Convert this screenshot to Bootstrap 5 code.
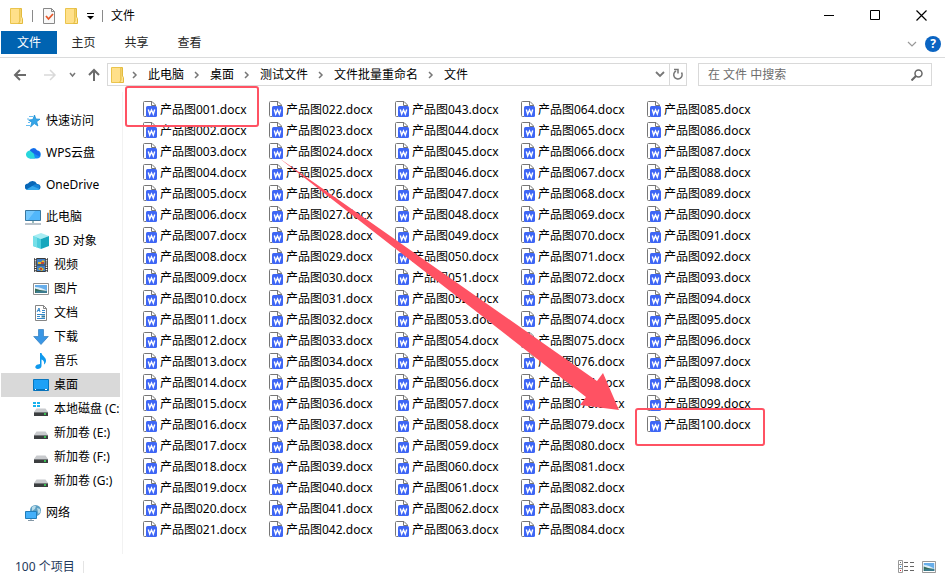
<!DOCTYPE html>
<html lang="zh-CN">
<head>
<meta charset="utf-8">
<meta name="viewport" content="width=device-width, initial-scale=1">
<title>文件</title>
<link href="https://cdn.jsdelivr.net/npm/bootstrap@5.3.0/dist/css/bootstrap.min.css" rel="stylesheet">
<style>
body{font-family:"Noto Sans","Noto Sans CJK SC",sans-serif;font-size:12px;line-height:20px;color:#000;background:#fff}
svg{display:block;flex:none}
button,.plain{border:0;background:none;padding:0;color:inherit}
a{color:inherit;text-decoration:none}
.titlebar{height:31px;padding-left:10px;padding-right:1px}
.sep{width:1px;height:12px;background:#8a8a8a}
.sep.pale{background:#e4e4e4}
.win{width:46px;height:30px;display:grid;place-items:center}
.ribbon{height:27px;border-bottom:1px solid #dadbdc;padding-left:1px}
.tab{height:23px;width:53px;color:#262626}
.tab.file{background:#0063b1;color:#fff;width:56px}
.help{width:16px;height:16px;border-radius:8px;background:#0a64c2;color:#fff;font-weight:700;line-height:16px}
.addr{height:34px;padding:0 13px 1px}
.arrows{gap:12px;padding-right:7px}
.box{height:23px;border:1px solid #d9d9d9}
.crumbs{flex:575 1 0;padding-left:3px}
.crumbs li svg{margin:0 9px}
.crumbs li:first-child svg{margin-left:6px}
.find{flex:215 1 0;min-width:0;margin-left:11px;padding:0 8px 0 9px}
.find input{outline:0;color:#6d6d6d;min-width:0}
.find input::placeholder{color:#6d6d6d;opacity:1}
.refresh{width:17px;height:21px;border-left:1px solid #d9d9d9;display:grid;place-items:center}
.side{width:123px;padding:17px 2px 29px 1px;border-right:1px solid #f2f2f2}
.side li{height:24px}
.side li.top{margin-top:8px}
.side li.first{margin-top:0}
.side a{height:24px;padding-left:32px;gap:5px;white-space:nowrap;overflow:hidden}
.side li.top a{padding-left:24px}
.side a.on{background:#d9d9d9}
.pane{padding:7px 0 0 20px}
.files{display:grid;grid-auto-flow:column;grid-template-rows:repeat(21,21px);grid-auto-columns:126px}
.files a{height:21px;gap:1px;white-space:nowrap}
.marks{position:absolute;left:0;top:0;overflow:visible;pointer-events:none}
.status{height:25px;padding:0 9px 0 15px;color:#1e395b}
</style>
</head>
<body>
<svg width="0" height="0" class="position-absolute" aria-hidden="true">
  <symbol id="folder" viewBox="0 0 14 16"><path d="M.5.5h9.500v15H.5z" fill="#ffe08a" stroke="#eac44c"/><path d="M10 9.500V.5h1.500V9l1 1.500v5H8.500L10 13z" fill="#ffe596" stroke="#e3bb3e"/></symbol>
  <symbol id="doc" viewBox="0 0 16 17"><path d="M3.500 15.500h-2a1 1 0 0 1-1-1v-13a1 1 0 0 1 1-1h7.500l3.500 3.500v1" fill="#fff" stroke="#777"/><path d="M8.500.5v4h4" fill="none" stroke="#777"/><rect x="3" y="5" width="11" height="11" rx="1.500" fill="#3e66f5"/><path d="M5.300 8.500 6.700 13 8.500 9l1.800 4 1.400-4.500" fill="none" stroke="#fff" stroke-width="1.400"/></symbol>
  <symbol id="star" viewBox="0 0 16 16"><path d="m9.500 2 1.400 4 4.100.2-3.300 2.500 1.200 4.300-3.600-2.400L5.500 14l1.300-4.600L3.600 7l4.200-.5z" fill="#35a5e8" stroke="#168bd1" stroke-width=".7"/><path d="M4 3.500h4M2 6h2M3 9.500h2M1 12.500h4" stroke="#68bdf0"/></symbol>
  <symbol id="wps" viewBox="0 0 16 16"><path d="M5 13.500a4 4 0 0 1-.5-7.500 4 4 0 0 1 7.500-.5 4 4 0 0 1-.5 8z" fill="#168df5"/><path d="M5 13.500a4 4 0 1 1 3.500-6L10 13.500z" fill="#28d6dc"/><path d="M5 5.500a4 4 0 0 1 7 0 4 4 0 0 1 2.500 6L8 8z" fill="#1767e8"/></symbol>
  <symbol id="one" viewBox="0 0 16 16"><path d="M3 13a3 3 0 0 1 0-6.500A5 5 0 0 1 12 7a3 3 0 0 1 1 6z" fill="#0867b7"/><path d="M1.500 12.500 9.500 7.500a4 4 0 0 1 3 0A3 3 0 0 1 13 13H3z" fill="#1683d6"/><path d="m1.500 12.500 6-3.500 7.500 3.200L13 13H3z" fill="#35a9ed"/></symbol>
  <symbol id="pc" viewBox="0 0 16 16"><path d="M.5 1.500h15v10H.5z" fill="#52b7fa" stroke="#39779f"/><path d="M1 2h9L3 11H1z" fill="#8cd4ff" opacity=".6"/><path d="M7 12h2v2H7z" fill="#9bb"/><path d="M0 15h16" stroke="#748798"/></symbol>
  <symbol id="cube" viewBox="0 0 16 16"><path d="m0 3 8-3 8 3-8 3z" fill="#a8edf3"/><path d="m0 3 8 3v10l-8-3z" fill="#4ccedd"/><path d="m16 3-8 3v10l8-3z" fill="#16a7bd"/><path d="m0 3 4 1.500v10L0 13z" fill="#75dfe8"/></symbol>
  <symbol id="video" viewBox="0 0 16 16"><path d="M1 1h14v14H1z" fill="#3a3a3a"/><path d="M2.500 1v14M13.500 1v14" stroke="#fff" stroke-width="1.500" stroke-dasharray="1.200 1"/><path d="M4 2h8v5.500H4zM4 8.500h8V14H4z" fill="#3f7fc7"/><path d="M5 5h3l2-2 2 2-3 2H5zM5 12l3-2 3 2-2 2z" fill="#e9b722"/><path d="M8 5h3v2H8zM7 11h2v2H7z" fill="#bd4937"/></symbol>
  <symbol id="image" viewBox="0 0 16 16"><path d="M.5 2.500h15v11H.5z" fill="#fff" stroke="#909090"/><path d="M2 4h12v8H2z" fill="#68aeea"/><path d="M2 6q6 0 12 4v2H2z" fill="#dff0f9"/><path d="M2 7.500 7 9l7 1v2H2z" fill="#376d5c"/><path d="M3 11h11" stroke="#408bc2"/></symbol>
  <symbol id="text" viewBox="0 0 16 16"><path d="M2.500.5h8l3 3v12h-11z" fill="#fff" stroke="#858585"/><path d="M10.500.5v3h3" fill="none" stroke="#858585"/><path d="m4 7 2-4 1 4M4.500 5.500h2.500M9 5.500h3M9 7.500h3M4 9.500h8M4 11.500h3M4 13.500h8" fill="none" stroke="#3689ca"/><path d="M8.500 10.500H12v2H8.500z" fill="#347a9b"/></symbol>
  <symbol id="down" viewBox="0 0 16 16"><path d="M5.500.5h5v7h4.800L8 15.500.7 7.500h4.800z" fill="#3996e5" stroke="#317dbd" stroke-width=".7"/></symbol>
  <symbol id="music" viewBox="0 0 16 16"><path d="M7 0h1.500c.5 3 4.500 4 4.500 7.500 0 2-1 3.500-2 4 .7-3-1-4.500-2.500-5V13c0 2-2 3-3.800 3C1.500 16 1.500 12 5 11.500L7 11z" fill="#0f99ed"/></symbol>
  <symbol id="desk" viewBox="0 0 16 16"><path d="M.5 2.500h15v11H.5z" fill="#1ea1f7" stroke="#0876be"/><path d="M1 12h14v1.500H1z" fill="#0871b8"/><path d="M2 12.500h1M12 12.500h2" stroke="#fff"/></symbol>
  <symbol id="disk" viewBox="0 0 16 16"><path d="m3.500 6.500h9L15 10H1z" fill="#c8cacd"/><path d="M1 10h14v4H1z" fill="#3c3e40"/><path d="M1 10.500h14" stroke="#74777a"/><path d="M11 12h2" stroke="#38e858" stroke-width="1.500"/></symbol>
  <symbol id="sysdisk" viewBox="0 0 16 16"><use href="#disk" y="1" width="16" height="16"/><path d="M0 1h3v2H0zM4 1h3v2H4zM0 4h3v2H0zM4 4h3v2H4z" fill="#18b2ed"/></symbol>
  <symbol id="net" viewBox="0 0 16 16"><circle cx="10.500" cy="5.500" r="5.500" fill="#5b9fc4"/><path d="M7 2q3-2 4-1L10 4 7 6zM12 3l3 1 .5 3-2 2z" fill="#b8dbe8"/><path d="M.5 6.500h11v7H.5z" fill="#43b0fa" stroke="#207db9"/><path d="M6 14v1.500M3 15.500h6" stroke="#8497a5"/></symbol>
</svg>

<div class="d-flex flex-column">
  <header class="titlebar d-flex align-items-center">
    <div class="d-flex align-items-center">
      <svg width="14" height="16"><use href="#folder"/></svg>
      <span class="sep ms-2"></span>
      <button class="ms-2" aria-label="属性"><svg width="16" height="16" viewBox="0 0 16 16"><path d="M2.500.5h8l3 3v12h-11z" fill="#f8f8f8" stroke="#888"/><path d="M10.500.5v3h3" fill="none" stroke="#888"/><path d="m5 8 2.500 3L12 6" fill="none" stroke="#e4572a" stroke-width="1.800"/></svg></button>
      <button class="ms-2" aria-label="新建文件夹"><svg width="14" height="16"><use href="#folder"/></svg></button>
      <button class="ms-2" aria-label="自定义快速访问工具栏"><svg width="7" height="8" viewBox="0 0 7 8"><path d="M0 1.500h7" stroke="#000"/><path d="M0 4h7L3.500 7.500z"/></svg></button>
      <span class="sep ms-2"></span>
      <span class="ms-2">文件</span>
    </div>
    <div class="d-flex ms-auto">
      <button class="win" aria-label="最小化"><svg width="11" height="11"><path d="M0 5.500h10" stroke="#000"/></svg></button>
      <button class="win" aria-label="最大化"><svg width="11" height="11"><path d="M.5.5h9v9h-9z" fill="none" stroke="#000"/></svg></button>
      <button class="win" aria-label="关闭"><svg width="11" height="11"><path d="m.5.5 10 10M10.500.5l-10 10" stroke="#000" stroke-width="1.200"/></svg></button>
    </div>
  </header>

  <nav class="ribbon d-flex">
    <button class="tab file">文件</button><button class="tab">主页</button><button class="tab">共享</button><button class="tab">查看</button>
    <div class="ms-auto d-flex align-items-center gap-2 pe-1">
      <button aria-label="展开功能区"><svg width="10" height="6"><path d="m1 1 4 4 4-4" fill="none" stroke="#999" stroke-width="1.200"/></svg></button>
      <button class="help" aria-label="帮助">?</button>
    </div>
  </nav>

  <div class="addr d-flex align-items-center">
    <div class="arrows d-flex align-items-center">
      <button aria-label="后退"><svg width="14" height="12"><path d="M13 6H2M7 1 2 6l5 5" fill="none" stroke="#6b6b6b" stroke-width="2"/></svg></button>
      <button class="ms-1" aria-label="前进"><svg width="14" height="12"><path d="M1 6h11M7 1l5 5-5 5" fill="none" stroke="#d9d9d9" stroke-width="1.500"/></svg></button>
      <button aria-label="最近位置"><svg width="7" height="6"><path d="m1 1 2.500 3L6 1" fill="none" stroke="#777" stroke-width="1.500"/></svg></button>
      <button aria-label="上移"><svg width="12" height="13"><path d="M6 13V2M1 7l5-5 5 5" fill="none" stroke="#6b6b6b" stroke-width="2"/></svg></button>
    </div>
    <div class="box crumbs d-flex align-items-center">
      <svg width="14" height="16"><use href="#folder"/></svg>
      <ol class="d-flex list-unstyled m-0" id="crumbs"></ol>
      <button class="ms-auto me-1" aria-label="历史记录"><svg width="10" height="8"><path d="m1 1 4 4 4-4" fill="none" stroke="#777" stroke-width="1.800"/></svg></button>
      <button class="refresh" aria-label="刷新"><svg width="12" height="13" viewBox="0 0 12 13"><path d="M4 3a4.200 4.200 0 1 0 5.500 1.500" fill="none" stroke="#777" stroke-width="1.500"/><path d="M2 1.500h4v4" fill="none" stroke="#777" stroke-width="1.500"/></svg></button>
    </div>
    <form class="box find d-flex align-items-center">
      <input class="plain flex-grow-1" type="text" aria-label="搜索" placeholder="在 文件 中搜索">
      <button type="button" aria-label="开始搜索"><svg width="12" height="12"><circle cx="7.500" cy="4.500" r="3.500" fill="none" stroke="#666" stroke-width="1.500"/><path d="m5 7-4.500 4.500" stroke="#666" stroke-width="2"/></svg></button>
    </form>
  </div>

  <main class="d-flex">
    <nav class="side flex-shrink-0"><ul class="list-unstyled m-0" id="side"></ul></nav>
    <section class="pane position-relative flex-grow-1">
      <ul class="files list-unstyled m-0" id="files"></ul>
      <svg class="marks" width="700" height="460" viewBox="123 92 700 460" aria-hidden="true">
        <g fill="none" stroke="#ff5263" stroke-width="2"><rect x="126" y="87" width="132" height="39" rx="2"/><rect x="636" y="409" width="128" height="36" rx="2"/></g>
        <path d="M279 158 597 381l6-8 16 37-39-5 6-8z" fill="#ff5263"/>
      </svg>
    </section>
  </main>

  <footer class="status d-flex align-items-center">
    <span>100 个项目</span><span class="sep pale ms-2"></span>
    <div class="ms-auto d-flex align-items-center gap-2">
      <button aria-label="详细信息"><svg width="16" height="13" viewBox="0 0 16 13"><path d="M.5.5h4v12h-4zM.5 4.500h4M.5 8.500h4" fill="none" stroke="#999"/><path d="M6 2.500h4M12 2.500h4M6 6.500h4M12 6.500h4M6 10.500h4M12 10.500h4" stroke="#666"/><path d="M2 2.500h1" stroke="#666"/><path d="M2 6.500h1" stroke="#2588d8"/><path d="M2 10.500h1" stroke="#d23"/></svg></button>
      <button aria-label="大缩略图"><svg width="14" height="16" viewBox="0 0 16 16" preserveAspectRatio="none"><use href="#image"/></svg></button>
    </div>
  </footer>
</div>

<script src="https://cdn.jsdelivr.net/npm/bootstrap@5.3.0/dist/js/bootstrap.bundle.min.js"></script>
<script>
const icon = (id, w, h) => `<svg width="${w}" height="${h}" aria-hidden="true"><use href="#${id}"/></svg>`;
document.getElementById('crumbs').innerHTML = ['此电脑', '桌面', '测试文件', '文件批量重命名', '文件'].map(t =>
  `<li class="d-flex align-items-center"><svg width="8" height="8"><path d="m2 1 3 3-3 3" fill="none" stroke="#777" stroke-width="1.500"/></svg><a href="#">${t}</a></li>`).join('');
const places = [
  ['star', '快速访问', 'top first'], ['wps', 'WPS云盘', 'top'], ['one', 'OneDrive', 'top'], ['pc', '此电脑', 'top'],
  ['cube', '3D 对象', ''], ['video', '视频', ''], ['image', '图片', ''], ['text', '文档', ''], ['down', '下载', ''],
  ['music', '音乐', ''], ['desk', '桌面', '', 'on'], ['sysdisk', '本地磁盘 (C:)', ''], ['disk', '新加卷 (E:)', ''],
  ['disk', '新加卷 (F:)', ''], ['disk', '新加卷 (G:)', ''], ['net', '网络', 'top']];
document.getElementById('side').innerHTML = places.map(([i, t, c, on]) =>
  `<li class="${c}"><a href="#" class="d-flex align-items-center ${on || ''}">${icon(i, 16, 16)}<span>${t}</span></a></li>`).join('');
document.getElementById('files').innerHTML = Array.from({length: 100}, (_, n) =>
  `<li><a href="#" class="d-flex align-items-center">${icon('doc', 16, 17)}<span>产品图${String(n + 1).padStart(3, '0')}.docx</span></a></li>`).join('');
</script>
</body>
</html>
